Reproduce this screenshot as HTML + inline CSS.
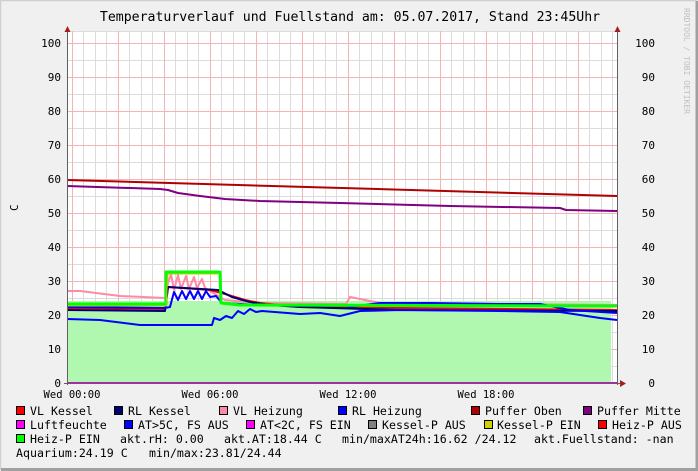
<!DOCTYPE html>
<html><head><meta charset="utf-8"><style>
html,body{margin:0;padding:0;background:#f0f0f0}
svg{display:block}
text{font-family:"DejaVu Sans Mono","Liberation Mono",monospace;fill:#000;white-space:pre}
</style></head><body>
<svg width="698" height="471" viewBox="0 0 698 471" xmlns="http://www.w3.org/2000/svg">
<rect x="0" y="0" width="698" height="471" fill="#f0f0f0"/>
<path d="M0.5 470 V0.5 H697" stroke="#d0d0d0" stroke-width="1.5" fill="none"/>
<path d="M1 469.5 H697 V1" stroke="#a0a0a0" stroke-width="3" fill="none"/>
<text x="350" y="21" font-size="13.2" text-anchor="middle">Temperaturverlauf und Fuellstand am: 05.07.2017, Stand 23:45Uhr</text>
<text transform="translate(684,8) rotate(90)" font-size="8" style="fill:#c0c0c0">RRDTOOL / TOBI OETIKER</text>
<rect x="67" y="31" width="550" height="352" fill="#fff"/>
<g id="grid" stroke-width="1">
<g stroke="#dcdcdc">
<path d="M67 31.5H617M67 60.5H617M67 94.5H617M67 128.5H617M67 162.5H617M67 196.5H617M67 230.5H617M67 264.5H617M67 298.5H617M67 332.5H617M67 366.5H617"/>
<path d="M83.5 31V383M95.5 31V383M106.5 31V383M129.5 31V383M141.5 31V383M152.5 31V383M175.5 31V383M187.5 31V383M198.5 31V383M221.5 31V383M233.5 31V383M244.5 31V383M267.5 31V383M279.5 31V383M290.5 31V383M313.5 31V383M325.5 31V383M336.5 31V383M359.5 31V383M371.5 31V383M382.5 31V383M405.5 31V383M417.5 31V383M428.5 31V383M451.5 31V383M463.5 31V383M474.5 31V383M497.5 31V383M509.5 31V383M520.5 31V383M543.5 31V383M555.5 31V383M566.5 31V383M589.5 31V383M601.5 31V383M612.5 31V383"/>
</g>
<g stroke="#f2b4b4">
<path d="M67 43.5H617M67 77.5H617M67 111.5H617M67 145.5H617M67 179.5H617M67 213.5H617M67 247.5H617M67 281.5H617M67 315.5H617M67 349.5H617"/>
<path d="M72.5 31V383M118.5 31V383M164.5 31V383M210.5 31V383M256.5 31V383M302.5 31V383M348.5 31V383M394.5 31V383M440.5 31V383M486.5 31V383M532.5 31V383M578.5 31V383"/>
</g>
</g>
<path d="M67 383 V301 H611 V383 Z" fill="#b0f8b0"/>
<g fill="none" stroke-width="2" stroke-linejoin="round">
<path d="M67 180 L617 196" stroke="#b00000"/>
<path d="M67 186 L160 189 L168 190 L178 193 L200 196 L225 199 L260 201 L340 203 L450 206 L560 208 L566 210 L617 211" stroke="#800080"/>
<path d="M67 291 L80 291 L120 296 L165 298 L168 283 L171 274 L174 290 L178 275 L181 289 L186 276 L189 289 L194 277 L197 288 L202 279 L205 288 L210 291 L225 300 L260 303 L346 304 L350 297 L360 299 L380 303 L617 305" stroke="#ff8aa8"/>
<path d="M67 308 L165 309 L168 287 L210 290 L225 294 L245 300 L260 303 L300 307 L400 308 L617 310" stroke="#ff0000"/>
<path d="M67 310 L165 311 L168 287 L218 290 L232 297 L250 302 L270 305 L300 307 L400 310 L617 311" stroke="#000070"/>
<path d="M67 307 L165 308 L170 307 L174 292 L178 300 L182 291 L186 299 L190 291 L194 299 L198 291 L202 299 L206 291 L210 297 L216 296 L222 303 L260 305 L345 305 L350 307 L380 303 L430 303 L500 304 L540 304 L570 310 L617 313" stroke="#0000ff"/>
<path d="M67 319 L100 320 L140 325 L200 325 L212 325 L214 318 L220 320 L226 316 L232 318 L238 311 L244 314 L250 309 L256 312 L262 311 L300 314 L320 313 L340 316 L360 311 L400 310 L500 311 L560 312 L600 318 L617 320" stroke="#0000ff"/>
<path d="M67 304 L166 304 L166 272 L220 272 L221 303 L240 305 L617 306" stroke="#00ff00" stroke-width="3"/>
<path d="M67 306 L166 306 L168 274 L218 274" stroke="#c8c800" stroke-width="1"/>
<path d="M67 383 H618" stroke="#e000e0"/>
</g>
<path d="M67.5 31V385M617.5 31V385M64 383.5H622" stroke="#606060" stroke-width="1"/>
<path d="M64.5 26 L67.5 32 L70.5 26Z" fill="#a02020" transform="rotate(180 67.5 29)"/>
<path d="M614.5 26 L617.5 32 L620.5 26Z" fill="#a02020" transform="rotate(180 617.5 29)"/>
<path d="M620 380 L626 383.5 L620 387Z" fill="#a02020"/>
<g font-size="11" text-anchor="end">
<text x="61" y="47">100</text><text x="61" y="81">90</text><text x="61" y="115">80</text><text x="61" y="149">70</text><text x="61" y="183">60</text><text x="61" y="217">50</text><text x="61" y="251">40</text><text x="61" y="285">30</text><text x="61" y="319">20</text><text x="61" y="353">10</text><text x="61" y="387">0</text>
<text x="655" y="47">100</text><text x="655" y="81">90</text><text x="655" y="115">80</text><text x="655" y="149">70</text><text x="655" y="183">60</text><text x="655" y="217">50</text><text x="655" y="251">40</text><text x="655" y="285">30</text><text x="655" y="319">20</text><text x="655" y="353">10</text><text x="655" y="387">0</text>
</g>
<text transform="translate(18,211) rotate(-90)" font-size="11">C</text>
<g font-size="10.5" text-anchor="middle">
<text x="72" y="398">Wed 00:00</text><text x="210" y="398">Wed 06:00</text><text x="348" y="398">Wed 12:00</text><text x="486" y="398">Wed 18:00</text>
</g>
<g stroke="#000" stroke-width="1">
<rect x="16.5" y="406.5" width="8" height="8" fill="#ff0000"/>
<rect x="114.5" y="406.5" width="8" height="8" fill="#000070"/>
<rect x="219.5" y="406.5" width="8" height="8" fill="#ff8aa8"/>
<rect x="338.5" y="406.5" width="8" height="8" fill="#0000ff"/>
<rect x="471.5" y="406.5" width="8" height="8" fill="#b00000"/>
<rect x="583.5" y="406.5" width="8" height="8" fill="#800080"/>
<rect x="16.5" y="420.5" width="8" height="8" fill="#ff00ff"/>
<rect x="124.5" y="420.5" width="8" height="8" fill="#0000ff"/>
<rect x="246.5" y="420.5" width="8" height="8" fill="#ff00ff"/>
<rect x="368.5" y="420.5" width="8" height="8" fill="#808080"/>
<rect x="484.5" y="420.5" width="8" height="8" fill="#d0d000"/>
<rect x="598.5" y="420.5" width="8" height="8" fill="#ff0000"/>
<rect x="16.5" y="434.5" width="8" height="8" fill="#00ff00"/>
</g>
<g font-size="11.6">
<text x="30" y="415">VL Kessel</text><text x="128" y="415">RL Kessel</text><text x="233" y="415">VL Heizung</text><text x="352" y="415">RL Heizung</text><text x="485" y="415">Puffer Oben</text><text x="597" y="415">Puffer Mitte</text>
<text x="30" y="429">Luftfeuchte</text><text x="138" y="429">AT&gt;5C, FS AUS</text><text x="260" y="429">AT&lt;2C, FS EIN</text><text x="382" y="429">Kessel-P AUS</text><text x="497" y="429">Kessel-P EIN</text><text x="612" y="429">Heiz-P AUS</text>
<text x="30" y="443">Heiz-P EIN</text><text x="120" y="443">akt.rH: 0.00</text><text x="224" y="443">akt.AT:18.44 C</text><text x="342" y="443">min/maxAT24h:16.62 /24.12</text><text x="534" y="443">akt.Fuellstand: -nan</text>
<text x="16" y="457">Aquarium:24.19 C</text><text x="149" y="457">min/max:23.81/24.44</text>
</g>
</svg>
</body></html>
